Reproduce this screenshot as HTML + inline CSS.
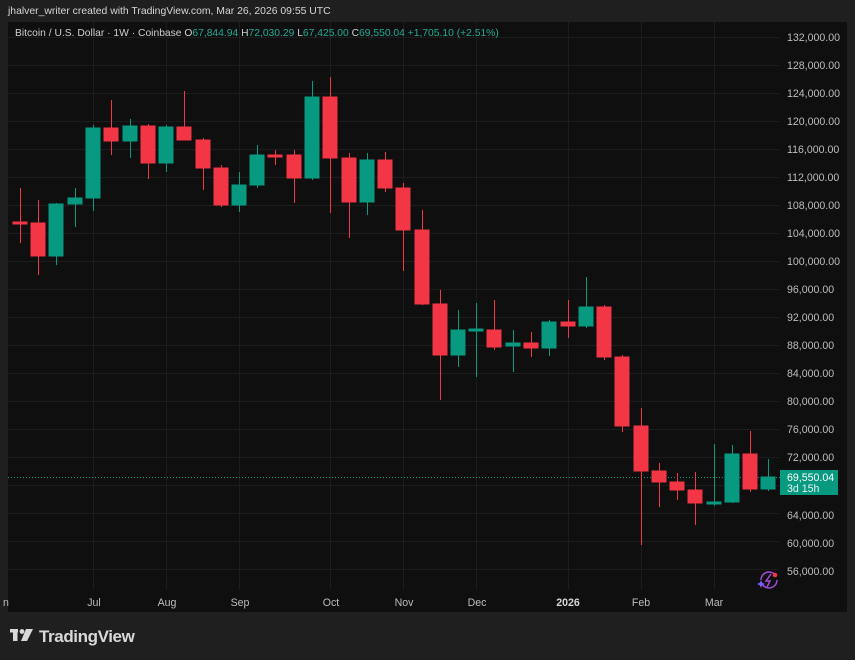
<!DOCTYPE html>
<html><head><meta charset="utf-8"><style>
html,body{margin:0;padding:0;background:#1f1f1f;width:855px;height:660px;overflow:hidden;font-family:"Liberation Sans",sans-serif}
.hdr{position:absolute;left:8px;top:6px;font-size:10.4px;color:#d6d6d6}
.panel{position:absolute;left:8px;top:22px;width:839px;height:590px;background:#0f0f0f}
svg{position:absolute;left:0;top:0}
.leg{position:absolute;left:15px;top:28px;font-size:10.3px;color:#cfcfcf;white-space:nowrap}
.leg .g{color:#22ab94}
</style></head><body>
<div class="hdr">jhalver_writer created with TradingView.com, Mar 26, 2026 09:55 UTC</div>
<div class="panel"></div>
<svg width="855" height="660" font-family="Liberation Sans, sans-serif">
<g stroke="#1d1d1d" stroke-width="1">
<line x1="8" x2="780" y1="37.5" y2="37.5"/><line x1="8" x2="780" y1="65.5" y2="65.5"/><line x1="8" x2="780" y1="93.5" y2="93.5"/><line x1="8" x2="780" y1="121.5" y2="121.5"/><line x1="8" x2="780" y1="149.5" y2="149.5"/><line x1="8" x2="780" y1="177.5" y2="177.5"/><line x1="8" x2="780" y1="205.5" y2="205.5"/><line x1="8" x2="780" y1="233.5" y2="233.5"/><line x1="8" x2="780" y1="261.5" y2="261.5"/><line x1="8" x2="780" y1="289.5" y2="289.5"/><line x1="8" x2="780" y1="317.5" y2="317.5"/><line x1="8" x2="780" y1="345.5" y2="345.5"/><line x1="8" x2="780" y1="373.5" y2="373.5"/><line x1="8" x2="780" y1="401.5" y2="401.5"/><line x1="8" x2="780" y1="429.5" y2="429.5"/><line x1="8" x2="780" y1="457.5" y2="457.5"/><line x1="8" x2="780" y1="485.5" y2="485.5"/><line x1="8" x2="780" y1="513.5" y2="513.5"/><line x1="8" x2="780" y1="541.5" y2="541.5"/><line x1="8" x2="780" y1="569.5" y2="569.5"/>
<line x1="93.5" x2="93.5" y1="22" y2="590"/><line x1="166.5" x2="166.5" y1="22" y2="590"/><line x1="239.5" x2="239.5" y1="22" y2="590"/><line x1="330.5" x2="330.5" y1="22" y2="590"/><line x1="403.5" x2="403.5" y1="22" y2="590"/><line x1="476.5" x2="476.5" y1="22" y2="590"/><line x1="568.5" x2="568.5" y1="22" y2="590"/><line x1="641.5" x2="641.5" y1="22" y2="590"/><line x1="714.5" x2="714.5" y1="22" y2="590"/>
</g>
<line x1="8" x2="780" y1="477.5" y2="477.5" stroke="#089981" stroke-dasharray="1 2"/>
<g stroke="#f23645" fill="#f23645">
<line x1="20.5" x2="20.5" y1="188" y2="243"/><rect x="13" y="222" width="14" height="2"/>
<line x1="38.5" x2="38.5" y1="200" y2="275"/><rect x="31" y="223" width="14" height="33"/>
<line x1="111.5" x2="111.5" y1="100" y2="155"/><rect x="104" y="128" width="14" height="13"/>
<line x1="148.5" x2="148.5" y1="124" y2="179"/><rect x="141" y="126" width="14" height="37"/>
<line x1="184.5" x2="184.5" y1="91" y2="140"/><rect x="177" y="127" width="14" height="13"/>
<line x1="203.5" x2="203.5" y1="138" y2="190"/><rect x="196" y="140" width="14" height="28"/>
<line x1="221.5" x2="221.5" y1="165" y2="207"/><rect x="214" y="168" width="14" height="37"/>
<line x1="275.5" x2="275.5" y1="150" y2="165"/><rect x="268" y="155" width="14" height="2"/>
<line x1="294.5" x2="294.5" y1="150" y2="203"/><rect x="287" y="155" width="14" height="23"/>
<line x1="330.5" x2="330.5" y1="77" y2="213"/><rect x="323" y="97" width="14" height="61"/>
<line x1="349.5" x2="349.5" y1="153" y2="238"/><rect x="342" y="158" width="14" height="44"/>
<line x1="385.5" x2="385.5" y1="152" y2="192"/><rect x="378" y="160" width="14" height="28"/>
<line x1="403.5" x2="403.5" y1="183" y2="271"/><rect x="396" y="188" width="14" height="42"/>
<line x1="422.5" x2="422.5" y1="210" y2="305"/><rect x="415" y="230" width="14" height="74"/>
<line x1="440.5" x2="440.5" y1="290" y2="400"/><rect x="433" y="304" width="14" height="51"/>
<line x1="494.5" x2="494.5" y1="300" y2="350"/><rect x="487" y="330" width="14" height="17"/>
<line x1="531.5" x2="531.5" y1="332" y2="357"/><rect x="524" y="343" width="14" height="5"/>
<line x1="568.5" x2="568.5" y1="300" y2="338"/><rect x="561" y="322" width="14" height="4"/>
<line x1="604.5" x2="604.5" y1="305" y2="360"/><rect x="597" y="307" width="14" height="50"/>
<line x1="622.5" x2="622.5" y1="355" y2="432"/><rect x="615" y="357" width="14" height="69"/>
<line x1="641.5" x2="641.5" y1="408" y2="545"/><rect x="634" y="426" width="14" height="45"/>
<line x1="659.5" x2="659.5" y1="463" y2="507"/><rect x="652" y="471" width="14" height="11"/>
<line x1="677.5" x2="677.5" y1="473" y2="500"/><rect x="670" y="482" width="14" height="8"/>
<line x1="695.5" x2="695.5" y1="472" y2="525"/><rect x="688" y="490" width="14" height="13"/>
<line x1="750.5" x2="750.5" y1="431" y2="492"/><rect x="743" y="454" width="14" height="35"/>
</g>
<g stroke="#089981" fill="#089981">
<line x1="56.5" x2="56.5" y1="203" y2="265"/><rect x="49" y="204" width="14" height="52"/>
<line x1="75.5" x2="75.5" y1="188" y2="227"/><rect x="68" y="198" width="14" height="6"/>
<line x1="93.5" x2="93.5" y1="125" y2="211"/><rect x="86" y="128" width="14" height="70"/>
<line x1="130.5" x2="130.5" y1="119" y2="158"/><rect x="123" y="126" width="14" height="15"/>
<line x1="166.5" x2="166.5" y1="125" y2="172"/><rect x="159" y="127" width="14" height="36"/>
<line x1="239.5" x2="239.5" y1="172" y2="212"/><rect x="232" y="185" width="14" height="20"/>
<line x1="257.5" x2="257.5" y1="145" y2="188"/><rect x="250" y="155" width="14" height="30"/>
<line x1="312.5" x2="312.5" y1="81" y2="180"/><rect x="305" y="97" width="14" height="81"/>
<line x1="367.5" x2="367.5" y1="153" y2="215"/><rect x="360" y="160" width="14" height="42"/>
<line x1="458.5" x2="458.5" y1="310" y2="367"/><rect x="451" y="330" width="14" height="25"/>
<line x1="476.5" x2="476.5" y1="303" y2="377"/><rect x="469" y="329" width="14" height="2"/>
<line x1="513.5" x2="513.5" y1="330" y2="372"/><rect x="506" y="343" width="14" height="3"/>
<line x1="549.5" x2="549.5" y1="320" y2="356"/><rect x="542" y="322" width="14" height="26"/>
<line x1="586.5" x2="586.5" y1="277" y2="328"/><rect x="579" y="307" width="14" height="19"/>
<line x1="714.5" x2="714.5" y1="444" y2="506"/><rect x="707" y="502" width="14" height="2"/>
<line x1="732.5" x2="732.5" y1="445" y2="503"/><rect x="725" y="454" width="14" height="48"/>
<line x1="768.5" x2="768.5" y1="459" y2="491"/><rect x="761" y="477" width="14" height="12"/>
</g>
<g fill="#bdbdbd" font-size="10.6" text-anchor="start">
<text x="787" y="41">132,000.00</text><text x="787" y="69">128,000.00</text><text x="787" y="97">124,000.00</text><text x="787" y="125">120,000.00</text><text x="787" y="153">116,000.00</text><text x="787" y="181">112,000.00</text><text x="787" y="209">108,000.00</text><text x="787" y="237">104,000.00</text><text x="787" y="265">100,000.00</text><text x="787" y="293">96,000.00</text><text x="787" y="321">92,000.00</text><text x="787" y="349">88,000.00</text><text x="787" y="377">84,000.00</text><text x="787" y="405">80,000.00</text><text x="787" y="433">76,000.00</text><text x="787" y="461">72,000.00</text><text x="787" y="519">64,000.00</text><text x="787" y="547">60,000.00</text><text x="787" y="575">56,000.00</text>
</g>
<rect x="780" y="470" width="58" height="25" fill="#089981"/>
<text x="787" y="481" fill="#fff" font-size="10.6">69,550.04</text>
<text x="787" y="492" fill="#e6f5f2" font-size="10.6">3d 15h</text>
<g fill="#bdbdbd" font-size="10.6" text-anchor="middle">
<text x="6" y="606">n</text><text x="94" y="606">Jul</text><text x="167" y="606">Aug</text><text x="240" y="606">Sep</text><text x="331" y="606">Oct</text><text x="404" y="606">Nov</text><text x="477" y="606">Dec</text><text x="568" y="606" font-weight="bold" fill="#d6d6d6">2026</text><text x="641" y="606">Feb</text><text x="714" y="606">Mar</text>
</g>
<g>
<circle cx="769" cy="580" r="8" fill="none" stroke="#a24ad8" stroke-width="1.5" stroke-dasharray="20 5"/>
<path d="M771 574 L766 581 L770 581 L767 587" fill="none" stroke="#a24ad8" stroke-width="1.5"/>
<circle cx="775" cy="575" r="2.3" fill="#f23645"/>
<path d="M761 580 l1.2 2.8 2.8 1.2 -2.8 1.2 -1.2 2.8 -1.2 -2.8 -2.8 -1.2 2.8 -1.2z" fill="#7b5cff"/>
</g>
<g transform="translate(10,629)" fill="#d9d9d9">
<rect x="0" y="0" width="8" height="3.5"/><rect x="3" y="0" width="4.5" height="12"/>
<circle cx="12" cy="2.5" r="2.4"/><path d="M16 0 H23 L17 12 H11 Z"/>
</g>
<text x="39" y="642" fill="#d9d9d9" font-size="17" font-weight="bold" letter-spacing="-0.4">TradingView</text>
</svg>
<div class="leg">Bitcoin / U.S. Dollar · 1W · Coinbase O<span class="g">67,844.94</span> H<span class="g">72,030.29</span> L<span class="g">67,425.00</span> C<span class="g">69,550.04</span> <span class="g">+1,705.10 (+2.51%)</span></div>
</body></html>
